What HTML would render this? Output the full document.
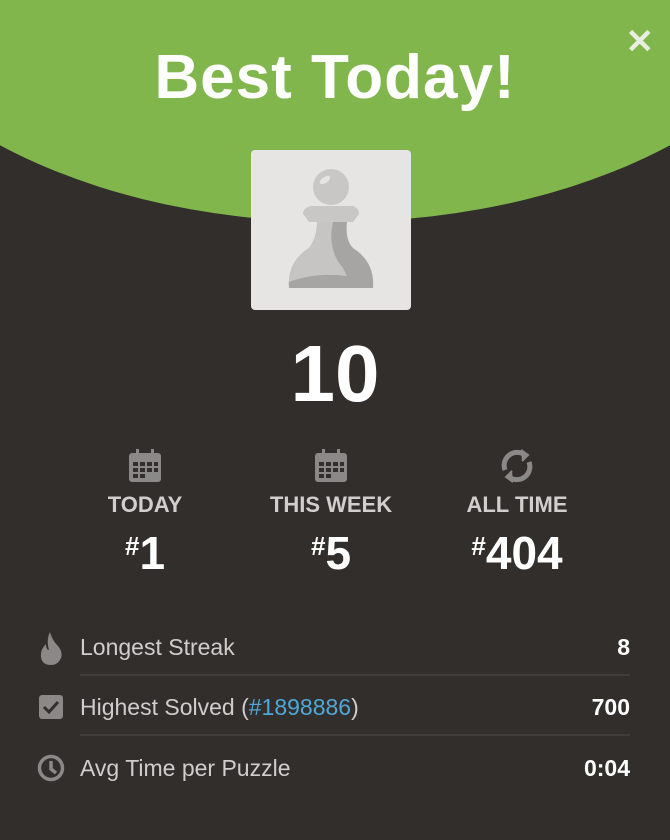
<!DOCTYPE html>
<html><head><meta charset="utf-8"><style>
*{margin:0;padding:0;box-sizing:border-box}
body{width:670px;height:840px;background:#312e2b;position:relative;overflow:hidden;font-family:"Liberation Sans",sans-serif}
.ell{position:absolute;left:-165px;top:-374px;width:1000px;height:596px;border-radius:50%;background:#81b64c}
.abs{position:absolute}
.title{left:0;width:670px;top:42px;text-align:center;color:#fff;font-weight:bold;font-size:62px;letter-spacing:1px}
.close{right:16px;top:22px;color:#e8efe0;font-size:34px;font-weight:bold}
.box{left:251px;top:150px;width:160px;height:160px;background:#e6e5e4;border-radius:4px}
.score{left:0;width:670px;top:328px;text-align:center;color:#fff;font-weight:bold;font-size:80px}
.col{width:200px;text-align:center}
.lab{color:#d0cfce;font-weight:bold;font-size:22px}
.num{color:#fff;font-weight:bold;font-size:46px}
.num sup{font-size:26px;vertical-align:14px}
.row{left:80px;width:550px;color:#cfcecd;font-size:23px;display:flex;justify-content:space-between}
.row b{color:#fff}
.line{left:80px;width:550px;height:2px;background:#3f3c39}
</style></head><body>
<div class="ell"></div>
<div class="abs title">Best Today!</div>
<div class="abs close">✕</div>
<div class="abs box">
<svg width="160" height="160" viewBox="0 0 160 160">
<path d="M38 138 Q36 112 58 98 Q66 88 66 72 L96 72 Q94 90 102 98 Q124 112 122 138 Z" fill="#a6a5a4"/>
<path d="M38 138 Q36 112 58 98 Q66 88 66 72 L82 72 Q76 100 92 118 L96 126 Q64 122 38 132Z" fill="#c6c5c4"/>
<path d="M60 56 L102 56 Q108 58 108 64 L102 72 L58 72 L52 64 Q52 58 60 56Z" fill="#c8c7c6"/>
<circle cx="80" cy="37" r="18" fill="#c8c7c6"/>
<ellipse cx="74" cy="30" rx="6" ry="3" fill="#e4e3e2" transform="rotate(-35 74 30)"/>
</svg></div>
<div class="abs score">10</div>

<div class="abs col" style="left:45px;top:448px"><svg width="36" height="36" viewBox="0 0 36 36"><rect x="2" y="5" width="32" height="29" rx="3" fill="#8b8987"/><rect x="9" y="1" width="3" height="7" fill="#8b8987"/><rect x="24" y="1" width="3" height="7" fill="#8b8987"/><g fill="#312e2b"><rect x="6" y="14" width="5" height="4"/><rect x="13" y="14" width="5" height="4"/><rect x="20" y="14" width="5" height="4"/><rect x="27" y="14" width="4" height="4"/><rect x="6" y="20" width="5" height="4"/><rect x="13" y="20" width="5" height="4"/><rect x="20" y="20" width="5" height="4"/><rect x="27" y="20" width="4" height="4"/><rect x="6" y="26" width="5" height="4"/><rect x="13" y="26" width="5" height="4"/></g></svg></div>
<div class="abs col" style="left:231px;top:448px"><svg width="36" height="36" viewBox="0 0 36 36"><rect x="2" y="5" width="32" height="29" rx="3" fill="#8b8987"/><rect x="9" y="1" width="3" height="7" fill="#8b8987"/><rect x="24" y="1" width="3" height="7" fill="#8b8987"/><g fill="#312e2b"><rect x="6" y="14" width="5" height="4"/><rect x="13" y="14" width="5" height="4"/><rect x="20" y="14" width="5" height="4"/><rect x="27" y="14" width="4" height="4"/><rect x="6" y="20" width="5" height="4"/><rect x="13" y="20" width="5" height="4"/><rect x="20" y="20" width="5" height="4"/><rect x="27" y="20" width="4" height="4"/><rect x="6" y="26" width="5" height="4"/><rect x="13" y="26" width="5" height="4"/></g></svg></div>
<div class="abs col" style="left:417px;top:446px"><svg width="40" height="40" viewBox="0 0 40 40" fill="none" stroke="#8b8987" stroke-width="5"><path d="M8 24 A13 13 0 0 1 28 9"/><path d="M32 16 A13 13 0 0 1 12 31"/><path d="M24 4 L31 9 L25 15" fill="#8b8987" stroke-width="2"/><path d="M16 36 L9 31 L15 25" fill="#8b8987" stroke-width="2"/></svg></div>

<div class="abs col lab" style="left:45px;top:492px">TODAY</div>
<div class="abs col lab" style="left:231px;top:492px">THIS WEEK</div>
<div class="abs col lab" style="left:417px;top:492px">ALL TIME</div>
<div class="abs col num" style="left:45px;top:526px"><sup>#</sup>1</div>
<div class="abs col num" style="left:231px;top:526px"><sup>#</sup>5</div>
<div class="abs col num" style="left:417px;top:526px"><sup>#</sup>404</div>

<svg class="abs" style="left:38px;top:630px" width="26" height="36" viewBox="0 0 26 36"><path d="M12 2 Q14 10 20 16 Q25 22 23 28 Q20 35 13 35 Q4 35 3 27 Q2 20 8 14 Q8 20 11 20 Q8 10 12 2Z" fill="#8b8987"/></svg>
<div class="abs row" style="top:634px"><span>Longest Streak</span><b>8</b></div>
<div class="abs line" style="top:674px"></div>
<svg class="abs" style="left:38px;top:694px" width="26" height="26" viewBox="0 0 26 26"><rect x="1" y="1" width="24" height="24" rx="3" fill="#8b8987"/><path d="M6 13 L11 18 L20 8" fill="none" stroke="#312e2b" stroke-width="3"/></svg>
<div class="abs row" style="top:694px"><span>Highest Solved (<span style="color:#4fa8d8">#1898886</span>)</span><b>700</b></div>
<div class="abs line" style="top:734px"></div>
<svg class="abs" style="left:37px;top:754px" width="28" height="28" viewBox="0 0 28 28" fill="none" stroke="#8b8987" stroke-width="3.5"><circle cx="14" cy="14" r="11.5"/><path d="M14 7 L14 15 L19 19"/></svg>
<div class="abs row" style="top:755px"><span>Avg Time per Puzzle</span><b>0:04</b></div>
</body></html>
